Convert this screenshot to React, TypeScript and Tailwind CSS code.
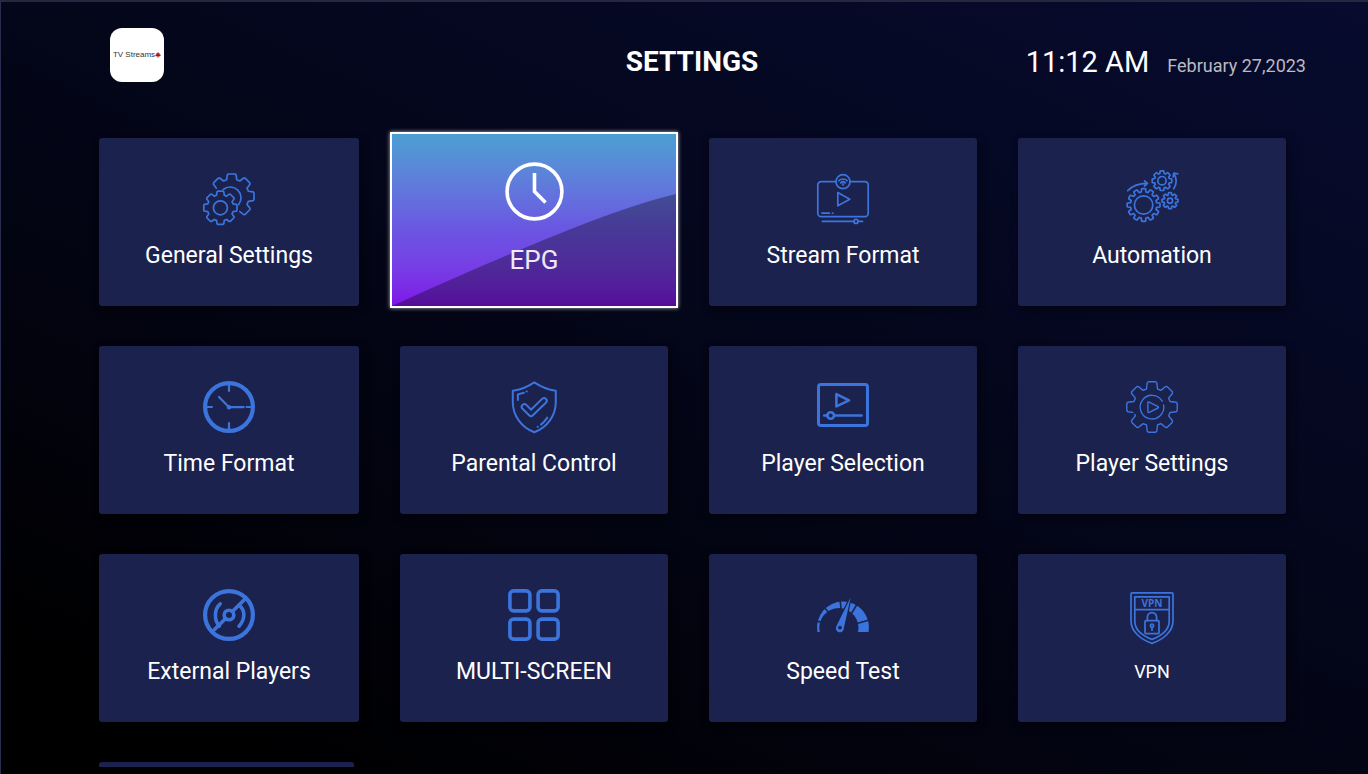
import type { ReactNode } from "react";
import clsx from "clsx";

const BLUE = "#3b74dc";
const CARD = "#1c224e";

// Outline of a gear; pass `from` and `count` to draw only some of the teeth.
function gear(
  cx: number,
  cy: number,
  outer: number,
  root: number,
  teeth: number,
  half: number,
  from = 0,
  count = teeth,
) {
  const points: string[] = [];
  for (let i = from; i < from + count; i++) {
    const a = (i / teeth) * Math.PI * 2 - Math.PI / 2;
    const corners = [
      [root, -half * 1.15],
      [outer - half * 0.2, -half],
      [outer, -half * 0.75],
      [outer, half * 0.75],
      [outer - half * 0.2, half],
      [root, half * 1.15],
    ];
    for (const [r, t] of corners) {
      const x = cx + r * Math.cos(a) - t * Math.sin(a);
      const y = cy + r * Math.sin(a) + t * Math.cos(a);
      points.push(`${x.toFixed(2)} ${y.toFixed(2)}`);
    }
  }
  return `M${points.join("L")}${count === teeth ? "Z" : ""}`;
}

function Icon({
  children,
  width = 1.7,
  viewBox = "0 0 52 52",
}: {
  children: ReactNode;
  width?: number;
  viewBox?: string;
}) {
  return (
    <svg
      viewBox={viewBox}
      className="size-13 shrink-0 overflow-visible"
      fill="none"
      stroke={BLUE}
      strokeWidth={width}
      strokeLinecap="round"
      strokeLinejoin="round"
      aria-hidden="true"
    >
      {children}
    </svg>
  );
}

const GeneralIcon = () => (
  <Icon>
    <path d={gear(28.7, 23.3, 22.3, 16.6, 8, 4.4, -1, 5)} />
    <path d="M20.3 16.5A10.8 10.8 0 0 1 35.6 31.6" />
    <path d={gear(17.4, 34.8, 16.6, 12.6, 8, 3.4)} />
    <circle cx="17.4" cy="34.8" r="7" />
  </Icon>
);

const EpgIcon = () => (
  <svg
    viewBox="0 0 59 59"
    className="size-[59px] shrink-0"
    fill="none"
    stroke="white"
    strokeWidth="3.6"
    aria-hidden="true"
  >
    <circle cx="29.5" cy="29.5" r="27.4" />
    <path d="M29.5 11V29.5L40.5 40.5" />
  </svg>
);

const StreamIcon = () => (
  <Icon>
    <path d="M19 8.7H4.2a3.4 3.4 0 0 0-3.4 3.4v28.2a3.4 3.4 0 0 0 3.4 3.4h43.6a3.4 3.4 0 0 0 3.4-3.4V12.1a3.4 3.4 0 0 0-3.4-3.4H33" />
    <circle cx="26" cy="8.7" r="7" />
    <path d="M21.9 7.6a6 6 0 0 1 8.2 0M23.7 9.8a3.4 3.4 0 0 1 4.6 0" />
    <circle cx="26" cy="11.6" r="0.4" />
    <path d="M20.8 19.6v13.2L32.8 26.2Z" />
    <path d="M5 40.2h7.3M15.4 40.2h.4M5.4 48.4h31.4M41.2 48.4h4.3" />
    <circle cx="39" cy="48.4" r="2" />
  </Icon>
);

const AutomationIcon = () => (
  <Icon viewBox="0 3 52 52">
    <path d={gear(17.6, 35, 16.4, 13, 12, 2)} />
    <circle cx="17.6" cy="35" r="9.2" />
    <path d={gear(36, 10.7, 9.8, 7.2, 8, 1.9)} />
    <circle cx="36" cy="10.7" r="4.2" />
    <path d={gear(44, 30.7, 8, 5.8, 8, 1.5)} />
    <circle cx="44" cy="30.7" r="2.6" />
    <path d="M1.7 20.6Q9 13.4 21 13.4M18.5 11l3 2.4-3 2.6" />
    <path d="M47.7 18.8Q52.6 11 48 3.6M47.2 7l.6-4 4 .8" />
  </Icon>
);

const TimeIcon = () => (
  <Icon width={2.2}>
    <circle cx="26" cy="26" r="23.9" strokeWidth="4.2" />
    <path d="M26 4v6M26 42v6M4 26h5M43.6 26H48M16 16l10 10.2h14.6" />
    <circle cx="26" cy="26.3" r="1.2" fill={BLUE} />
  </Icon>
);

const ParentalIcon = () => (
  <Icon width={2}>
    <path d="M26.3 1.4C20 5.6 13 8.8 4.8 9.8v11.4c0 13.6 9 25.4 21.5 30 12.5-4.6 21.5-16.4 21.5-30V9.8C39.6 8.8 32.6 5.6 26.3 1.4Z" />
    <path d="M16.4 25.8l6.6 6.6 13-12.6" strokeWidth="7.4" />
    <path d="M16.4 25.8l6.6 6.6 13-12.6" strokeWidth="3.4" stroke={CARD} />
    <path d="M9.9 19v-5.6l6-1.7M18.6 10.4h.2M39.3 36.6q-2.6 4-6.3 7M29.6 45.8h.2" />
  </Icon>
);

const PlayerSelectionIcon = () => (
  <Icon width={2.6}>
    <rect x="1.5" y="3.6" width="49" height="40.8" rx="2.4" strokeWidth="3" />
    <path d="M19.4 13.2v12.2l12.6-6.1Z" />
    <path d="M7.2 34.5h3M17.4 34.5h27.2" />
    <circle cx="13.7" cy="34.5" r="3.3" />
  </Icon>
);

const PlayerSettingsIcon = () => (
  <Icon width={1.4}>
    <path
      d={gear(26, 26, 25.2, 18, 8, 4.8)}
      pathLength="100"
      strokeDasharray="74 1.6 100"
    />
    <path d="M36.2 20.2A11.8 11.8 0 1 0 37.6 24" />
    <path d="M21.9 21.8v8.8q0 1.4 1.3.8l8.8-4.4q1-.7 0-1.4l-8.8-4.5q-1.3-.6-1.3.7Z" />
  </Icon>
);

const ExternalIcon = () => (
  <Icon width={3.6}>
    <circle cx="26" cy="26" r="23.9" strokeWidth="4.2" />
    <path d="M11.3 40.7L22.6 29.4M29.4 22.6L41.5 10.5" />
    <circle cx="26" cy="26" r="4.8" />
    <path d="M17.2 14.8Q12.4 19 12.4 26T16.4 37M36.4 16.4Q40.8 20 40.8 26T36 37.2" />
  </Icon>
);

const MultiScreenIcon = () => (
  <Icon width={3.6}>
    <rect x="1.9" y="1.9" width="20" height="20" rx="3.6" />
    <rect x="30.1" y="1.9" width="20" height="20" rx="3.6" />
    <rect x="1.9" y="30.1" width="20" height="20" rx="3.6" />
    <rect x="30.1" y="30.1" width="20" height="20" rx="3.6" />
  </Icon>
);

const SpeedIcon = () => (
  <Icon>
    <path
      d="M.4 43A26 26 0 1 1 51.6 43H41A19.6 19.6 0 1 0 2.8 43Z"
      fill={BLUE}
      stroke="none"
    />
    <path
      d="M26 38.6L-2 31.6M26 38.6L4 15M26 38.6L23 10M26 38.6L42 12M26 38.6L54 30.6"
      stroke={CARD}
      strokeWidth="1.6"
      strokeLinecap="butt"
    />
    <path
      d="M33.6 8.4L19.2 37.6a4 4 0 1 0 7.6 1.8Z"
      fill={BLUE}
      stroke={CARD}
      strokeWidth="2.4"
      paintOrder="stroke"
    />
    <circle cx="23" cy="38.6" r="1.9" fill={CARD} stroke="none" />
  </Icon>
);

const VpnIcon = () => (
  <Icon viewBox="0 -3 52 52">
    <path d="M6.2.9h39.6q1.2 0 1.2 1.2V29c0 10.6-10 18.6-21 22.4C15 47.6 5 39.6 5 29V2.1Q5 .9 6.2.9Z" />
    <path d="M8.8 4.8h34.4V29c0 9-8.2 15-17.2 18.4C17 44 8.8 38 8.8 29ZM8.8 17.7h34.4" />
    <text
      x="26"
      y="15"
      textAnchor="middle"
      className="font-['Open_Sans',sans-serif] text-[10px] font-bold"
      fill={BLUE}
      stroke="none"
    >
      VPN
    </text>
    <rect x="19" y="28.6" width="14" height="13" rx="1" />
    <path d="M21.4 28.4v-3.2a4.6 4.6 0 0 1 9.2 0v3.2M26 35.6v2.6" />
    <circle cx="26" cy="33.8" r="1.6" />
  </Icon>
);

const settings = [
  { label: "General Settings", icon: GeneralIcon },
  { label: "EPG", icon: EpgIcon, focused: true },
  { label: "Stream Format", icon: StreamIcon },
  { label: "Automation", icon: AutomationIcon },
  { label: "Time Format", icon: TimeIcon },
  { label: "Parental Control", icon: ParentalIcon },
  { label: "Player Selection", icon: PlayerSelectionIcon },
  { label: "Player Settings", icon: PlayerSettingsIcon },
  { label: "External Players", icon: ExternalIcon },
  { label: "MULTI-SCREEN", icon: MultiScreenIcon },
  { label: "Speed Test", icon: SpeedIcon },
  { label: "VPN", icon: VpnIcon, small: true },
];

function FocusedCard({ label, icon: Glyph }: (typeof settings)[number]) {
  return (
    <button
      type="button"
      className="relative -mx-2.5 -mt-1.5 -mb-0.5 flex flex-col items-center border-2 border-white bg-linear-to-b from-[#4a9fd2] via-[#6a56e2] via-55% to-[#8010e8] pt-7 text-white shadow-[0_0_4px_rgba(255,255,255,0.7)]"
    >
      {/* Shaded hill behind the label */}
      <svg
        viewBox="0 0 286 172"
        preserveAspectRatio="none"
        className="absolute inset-0 size-full"
        aria-hidden="true"
      >
        <path d="M0 172C120 118 225 74 286 60V172Z" fill="#000" opacity="0.33" />
      </svg>
      <span className="relative flex flex-col items-center gap-[23px]">
        <Glyph />
        <span className="text-[26px] leading-8 text-white/90">{label}</span>
      </span>
    </button>
  );
}

function SettingCard({ label, icon: Glyph, small }: (typeof settings)[number]) {
  return (
    <button
      type="button"
      className="flex flex-col items-center gap-[15px] rounded-[3px] bg-[#1c224e] pt-[35px] text-white shadow-[2px_3px_8px_rgba(0,0,0,0.5)]"
    >
      <Glyph />
      <span className={clsx("leading-8", small ? "text-lg" : "text-[23px]")}>
        {label}
      </span>
    </button>
  );
}

function Logo() {
  return (
    <div className="ml-8 flex size-[54px] items-center justify-center rounded-xl bg-white">
      <span className="font-['Liberation_Sans',sans-serif] text-[8px] whitespace-nowrap text-[#333]">
        TV Streams
      </span>
      <svg
        viewBox="0 0 10 10"
        className="size-1.5 shrink-0"
        fill="#b01010"
        aria-hidden="true"
      >
        <path d="M5 0l1.5 2.5L8 2l-.4 2.5H10L8.5 7l-3 .5V10h-1V7.5L1.5 7 0 4.5h2.4L2 2l1.5.5Z" />
      </svg>
    </div>
  );
}

export default function App() {
  return (
    <div className="flex h-screen flex-col overflow-hidden border-t-2 border-l border-t-[#26283f] border-l-[#2b2d50] bg-[linear-gradient(205deg,#070b2e,#04061a_45%,#000_92%)] pb-[7px] font-['Roboto',sans-serif]">
      <header className="grid shrink-0 grid-cols-[1fr_auto_1fr] pt-[26px] pr-[62px] pl-[77px]">
        <Logo />
        <h1 className="pt-4 text-[28px] leading-9 font-bold text-white">
          SETTINGS
        </h1>
        <div className="flex items-baseline justify-end gap-[18px] pt-4 leading-9">
          <span className="text-[29px] text-white">11:12 AM</span>
          <span className="text-lg leading-9 text-[#b9bac2]">
            February 27,2023
          </span>
        </div>
      </header>

      <main className="min-h-0 flex-1 overflow-hidden pt-[54px] pr-[82px] pl-[98px]">
        <div className="grid auto-rows-[168px] grid-cols-[260fr_268fr_268fr_268fr] gap-x-[41px] gap-y-10">
          {settings.map((item) =>
            item.focused ? (
              <FocusedCard key={item.label} {...item} />
            ) : (
              <SettingCard key={item.label} {...item} />
            ),
          )}
          <div className="mr-[5px] rounded-[3px] bg-[#1c224e]" />
        </div>
      </main>
    </div>
  );
}
